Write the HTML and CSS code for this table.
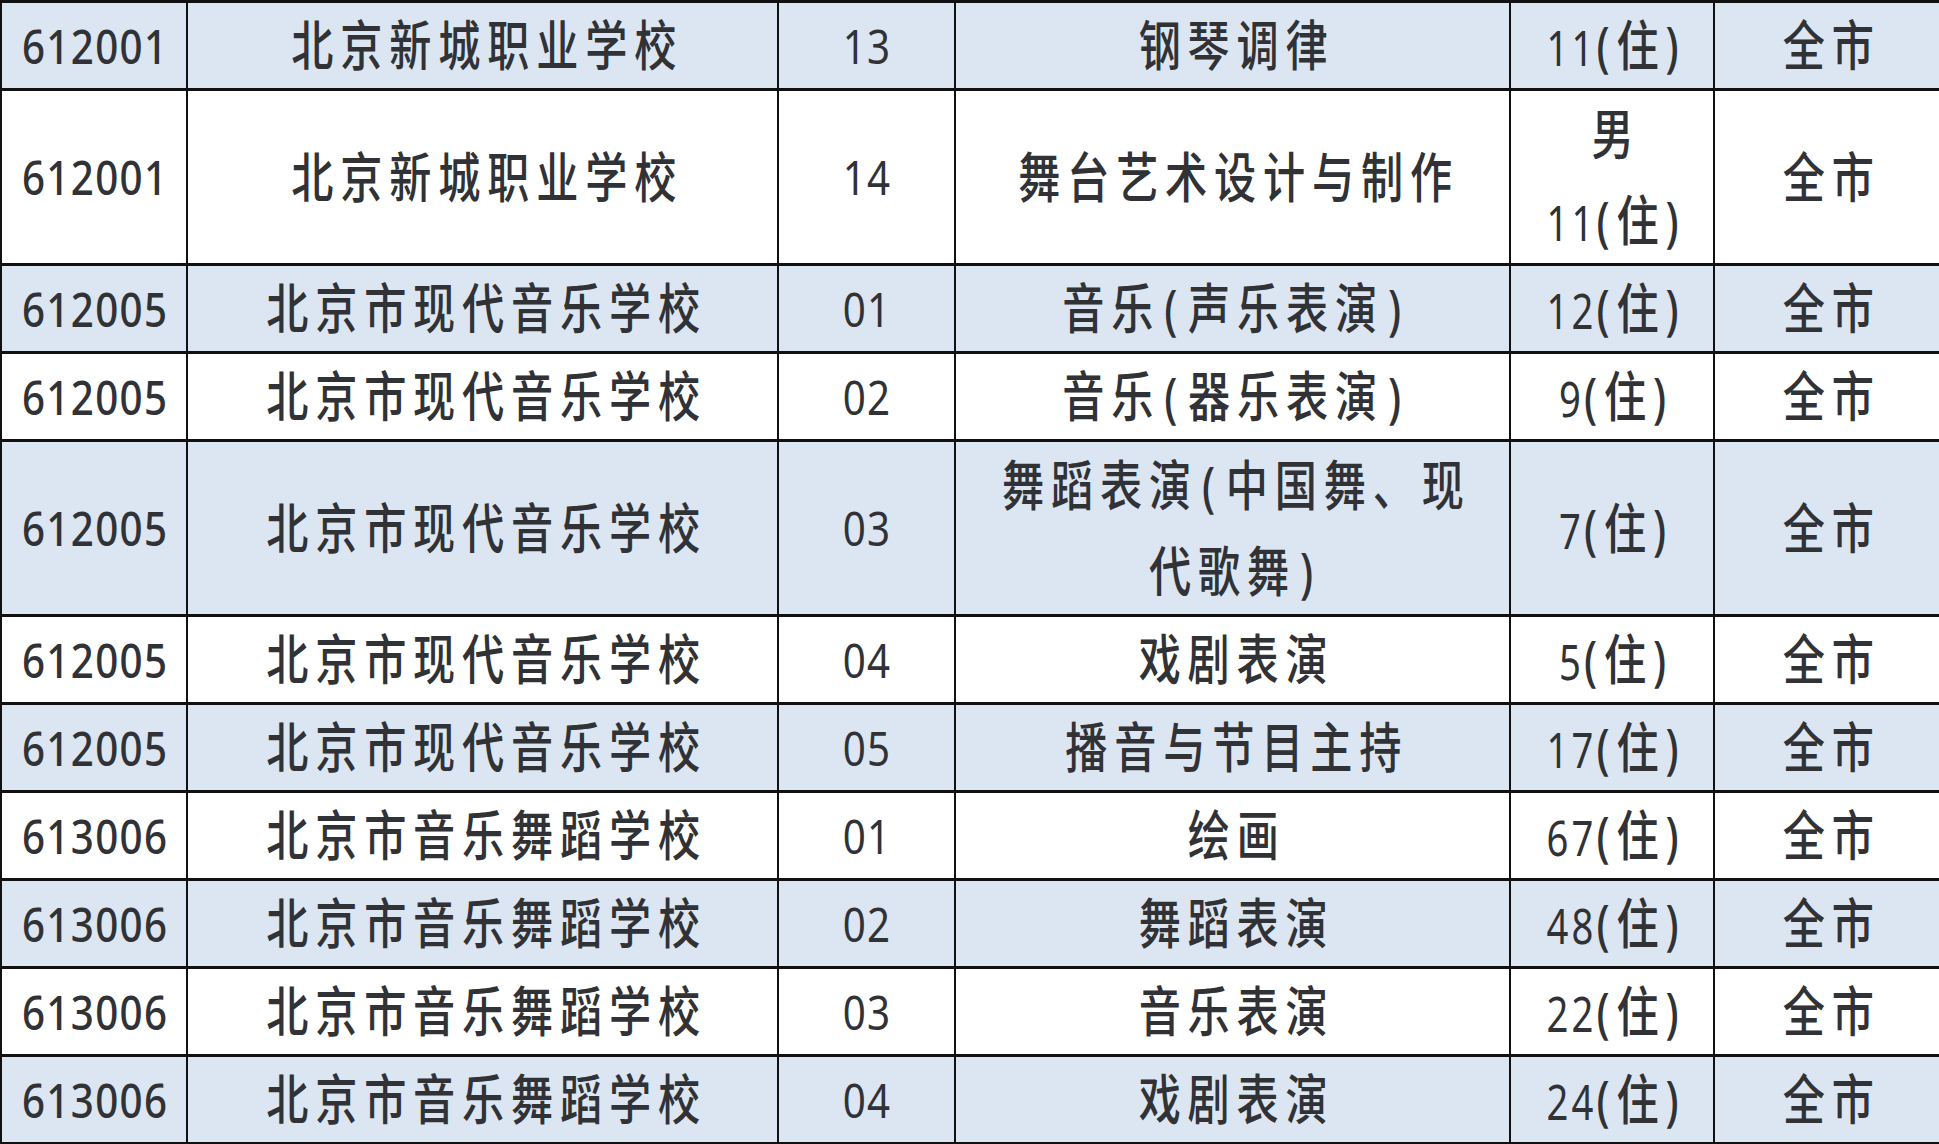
FILE: index.html
```html
<!DOCTYPE html>
<html lang="zh-CN">
<head>
<meta charset="utf-8">
<title>招生计划</title>
<link rel="stylesheet" href="styles.css">
</head>
<body>
<table class="plan">
<colgroup>
<col class="c1"><col class="c2"><col class="c3"><col class="c4"><col class="c5"><col class="c6">
</colgroup>
<tbody>
<tr class="b"><td><span class="t id">612001</span></td><td><span class="t">北京新城职业学校</span></td><td><span class="t n">13</span></td><td><span class="t">钢琴调律</span></td><td><span class="t"><span class="d">11</span>(住)</span></td><td><span class="t">全市</span></td></tr>
<tr class="w two"><td><span class="t id">612001</span></td><td><span class="t">北京新城职业学校</span></td><td><span class="t n">14</span></td><td><span class="t">舞台艺术设计与制作</span></td><td><span class="t">男<br><span class="d">11</span>(住)</span></td><td><span class="t">全市</span></td></tr>
<tr class="b"><td><span class="t id">612005</span></td><td><span class="t">北京市现代音乐学校</span></td><td><span class="t n">01</span></td><td><span class="t">音乐<span class="p">(</span>声乐表演<span class="p">)</span></span></td><td><span class="t"><span class="d">12</span>(住)</span></td><td><span class="t">全市</span></td></tr>
<tr class="w"><td><span class="t id">612005</span></td><td><span class="t">北京市现代音乐学校</span></td><td><span class="t n">02</span></td><td><span class="t">音乐<span class="p">(</span>器乐表演<span class="p">)</span></span></td><td><span class="t"><span class="d">9</span>(住)</span></td><td><span class="t">全市</span></td></tr>
<tr class="b two"><td><span class="t id">612005</span></td><td><span class="t">北京市现代音乐学校</span></td><td><span class="t n">03</span></td><td><span class="t wide">舞蹈表演<span class="p">(</span>中国舞、现<br>代歌舞<span class="p">)</span></span></td><td><span class="t"><span class="d">7</span>(住)</span></td><td><span class="t">全市</span></td></tr>
<tr class="w"><td><span class="t id">612005</span></td><td><span class="t">北京市现代音乐学校</span></td><td><span class="t n">04</span></td><td><span class="t">戏剧表演</span></td><td><span class="t"><span class="d">5</span>(住)</span></td><td><span class="t">全市</span></td></tr>
<tr class="b"><td><span class="t id">612005</span></td><td><span class="t">北京市现代音乐学校</span></td><td><span class="t n">05</span></td><td><span class="t">播音与节目主持</span></td><td><span class="t"><span class="d">17</span>(住)</span></td><td><span class="t">全市</span></td></tr>
<tr class="w"><td><span class="t id">613006</span></td><td><span class="t">北京市音乐舞蹈学校</span></td><td><span class="t n">01</span></td><td><span class="t">绘画</span></td><td><span class="t"><span class="d">67</span>(住)</span></td><td><span class="t">全市</span></td></tr>
<tr class="b"><td><span class="t id">613006</span></td><td><span class="t">北京市音乐舞蹈学校</span></td><td><span class="t n">02</span></td><td><span class="t">舞蹈表演</span></td><td><span class="t"><span class="d">48</span>(住)</span></td><td><span class="t">全市</span></td></tr>
<tr class="w"><td><span class="t id">613006</span></td><td><span class="t">北京市音乐舞蹈学校</span></td><td><span class="t n">03</span></td><td><span class="t">音乐表演</span></td><td><span class="t"><span class="d">22</span>(住)</span></td><td><span class="t">全市</span></td></tr>
<tr class="b"><td><span class="t id">613006</span></td><td><span class="t">北京市音乐舞蹈学校</span></td><td><span class="t n">04</span></td><td><span class="t">戏剧表演</span></td><td><span class="t"><span class="d">24</span>(住)</span></td><td><span class="t">全市</span></td></tr>
</tbody>
</table>
</body>
</html>
```

FILE: styles.css
```css
html, body {
  margin: 0;
  padding: 0;
  background: #ffffff;
}

.plan {
  border-collapse: collapse;
  table-layout: fixed;
  width: 1939px;
  font-family: "Noto Sans", "Noto Sans CJK SC", sans-serif;
  color: #313236;
}

.c1 { width: 186px; }
.c2 { width: 591px; }
.c3 { width: 177px; }
.c4 { width: 555px; }
.c5 { width: 204px; }
.c6 { width: 226px; }

.plan td {
  border-left: 2px solid #111;
  border-right: 2px solid #111;
  border-top: 3px solid #111;
  border-bottom: 3px solid #111;
  padding: 0;
  text-align: center;
  vertical-align: middle;
  font-size: 0;
  line-height: 0;
  white-space: nowrap;
}

.plan tr.b td {
  background: #dce6f2;
}

.plan tr.w td {
  background: #ffffff;
}

.t {
  display: inline-block;
  vertical-align: top;
  font-size: 54px;
  line-height: 85px;
  transform: scaleX(0.78);
  letter-spacing: 8.8px;
  margin-right: -8.8px;
  font-weight: 500;
}

.plan tr.two .t {
  line-height: 86px;
}

.t.wide {
  margin-left: -60px;
  margin-right: -68.8px;
}

.t.id,
.t.n {
  font-size: 48px;
  transform: scaleX(0.84);
  letter-spacing: 1.6px;
  margin-right: -1.6px;
}

.t.n {
  font-weight: 400;
}

.d {
  font-size: 49px;
  line-height: 1;
  font-weight: 400;
  letter-spacing: 4px;
}

.p {
  padding: 0 5px;
}
```
